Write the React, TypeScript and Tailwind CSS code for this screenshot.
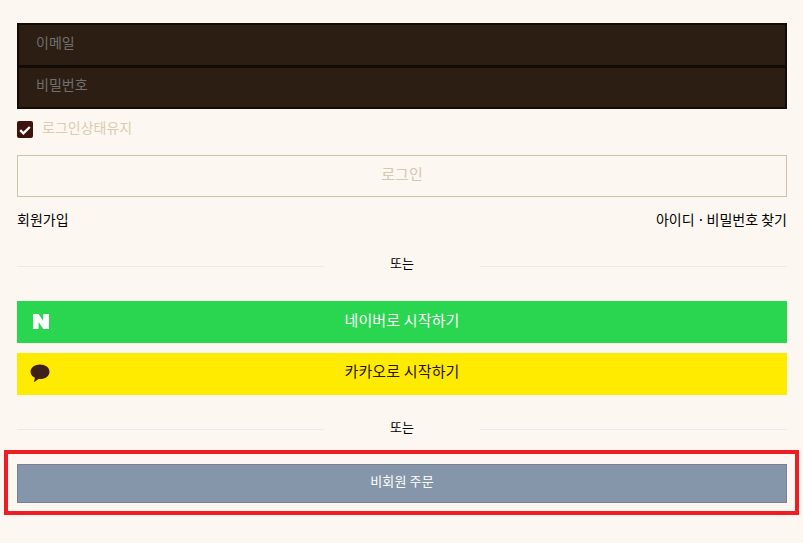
export default function App() {
  const font = { fontFamily: '"Noto Sans CJK KR", "Noto Sans", sans-serif' };
  return (
    <div style={font} className="relative w-[803px] h-[543px] overflow-hidden bg-[#fcf7f1] pl-[17px] pr-[16px] pt-[23px]">
      <div className="border-2 border-[#120b06] bg-[#2d1e13]">
        <div className="h-[40px] flex items-center pl-[17px] pb-[6px] text-[14px] text-[#70706f]">이메일</div>
        <div className="h-[3px] bg-[#120b06]" />
        <div className="h-[39px] flex items-center pl-[17px] pb-[6px] text-[14px] text-[#70706f]">비밀번호</div>
      </div>
      <div className="flex items-center mt-[12px] h-[17px] gap-[9px]">
        <div className="w-4 h-[17px] rounded-[2px] bg-[#40120c] flex items-center justify-center">
          <svg viewBox="0 0 16 16" className="w-4 h-4" fill="none" stroke="#fff" strokeWidth="2.4">
            <path d="M3.2 8.2l3.2 3.2 6.4-6.4" />
          </svg>
        </div>
        <span className="text-[14px] leading-[17px] pb-[5px] text-[#dccbb0]">로그인상태유지</span>
      </div>
      <div className="mt-[17px] h-[42px] border border-[#cfc4a6] flex items-center justify-center pb-[4px] text-[15px] text-[#d3c9ae]">로그인</div>
      <div className="mt-[13px] flex justify-between text-[14px] leading-[18px] text-black">
        <span>회원가입</span>
        <span>아이디<span className="tracking-[-0.7px]"> · </span>비밀번호 찾기</span>
      </div>
      <div className="mt-[26px] flex items-center h-[18px]">
        <div className="flex-1 h-px bg-[#e9e9ee] mt-[7px]" />
        <span className="w-[156px] text-center text-[13px] leading-[18px] text-black">또는</span>
        <div className="flex-1 h-px bg-[#e9e9ee] mt-[7px]" />
      </div>
      <div className="relative mt-[29px] h-[42px] bg-[#2ad64f] flex items-center justify-center pb-[3px] text-[15px] tracking-[0.15px] text-white">
        <svg viewBox="0 0 16 15" className="absolute left-[16px] top-[13px] w-4 h-[15px]" fill="#fff">
          <path d="M0 0h5.6l4.6 6.9V0H16v15h-5.6L5.6 8.1V15H0z" />
        </svg>
        네이버로 시작하기
      </div>
      <div className="relative mt-[10px] h-[42px] bg-[#ffeb00] flex items-center justify-center pb-[6px] text-[15px] tracking-[0.15px] text-[#2a1410]">
        <svg viewBox="0 0 20 19" className="absolute left-[13px] top-[11px] w-5 h-[19px]" fill="#40201a">
          <path d="M10 0.5C4.7 0.5 0.5 3.7 0.5 7.7c0 2.6 1.8 4.8 4.4 6.1l-1 4.4 4.6-3.2c.5.1 1 .1 1.5.1 5.3 0 9.5-3.2 9.5-7.4S15.3.5 10 .5z" />
        </svg>
        카카오로 시작하기
      </div>
      <div className="mt-[23px] flex items-center h-[18px]">
        <div className="flex-1 h-px bg-[#e9e9ee] mt-[5px]" />
        <span className="w-[156px] text-center text-[13px] leading-[18px] text-black">또는</span>
        <div className="flex-1 h-px bg-[#e9e9ee] mt-[5px]" />
      </div>
      <div className="mt-[28px] h-[39px] border border-[#7d8090] bg-[#8696aa] flex items-center justify-center pb-[6px] text-[13px] tracking-[0.15px] text-white">비회원 주문</div>
      <div className="absolute left-[4px] top-[450px] w-[795px] h-[65px] border-[4px] border-[#f01c24] pointer-events-none" />
    </div>
  );
}
